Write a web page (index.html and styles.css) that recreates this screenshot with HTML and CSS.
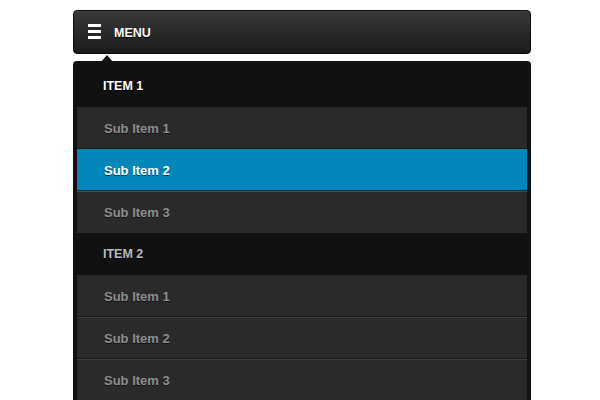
FILE: index.html
```html
<!DOCTYPE html>
<html>
<head>
<meta charset="utf-8">
<link rel="stylesheet" href="styles.css">
</head>
<body>
<div class="nav">
  <div class="menu-bar">
    <span class="burger"><i></i><i></i><i></i></span>
    <span class="menu-label">MENU</span>
    <span class="caret"></span>
  </div>
  <div class="panel">
    <div class="group">
      <div class="item active-parent">ITEM 1</div>
      <div class="sub">Sub Item 1</div>
      <div class="sub active">Sub Item 2</div>
      <div class="sub after-active">Sub Item 3</div>
    </div>
    <div class="group">
      <div class="item">ITEM 2</div>
      <div class="sub">Sub Item 1</div>
      <div class="sub">Sub Item 2</div>
      <div class="sub">Sub Item 3</div>
    </div>
  </div>
</div>
</body>
</html>
```
FILE: styles.css
```css
html, body {
  margin: 0;
  padding: 0;
  background: #ffffff;
  font-family: "Liberation Sans", Arial, sans-serif;
}

.nav {
  width: 458px;
  margin: 10px 0 0 73px;
}

.menu-bar {
  position: relative;
  box-sizing: border-box;
  height: 44px;
  display: flex;
  align-items: center;
  padding-left: 14px;
  gap: 13px;
  border: 1px solid #0a0a0a;
  border-radius: 4px;
  background: linear-gradient(#383838, #1b1b1b);
  box-shadow: inset 0 1px 0 #444;
}

.burger {
  display: flex;
  flex-direction: column;
  gap: 3px;
  width: 13px;
  margin-top: -1px;
}

.burger i {
  display: block;
  height: 3px;
  background: #ffffff;
}

.menu-label {
  color: #ffffff;
  font-weight: bold;
  font-size: 12.5px;
  text-shadow: 0 1px 0 #000;
  margin-top: 1px;
}

.caret {
  position: absolute;
  left: 27px;
  top: 44px;
  width: 0;
  height: 0;
  border-left: 6px solid transparent;
  border-right: 6px solid transparent;
  border-bottom: 7px solid #111;
}

.panel {
  margin-top: 7px;
  background: #111111;
  border-radius: 4px 4px 0 0;
  padding: 4px 4px 8px 4px;
}

.item {
  height: 42px;
  display: flex;
  align-items: center;
  padding-left: 26px;
  font-size: 12.5px;
  font-weight: bold;
  color: #b9bcc0;
  text-shadow: 0 1px 0 #000;
}

.item.active-parent {
  color: #ffffff;
}

.sub {
  box-sizing: border-box;
  height: 42px;
  display: flex;
  align-items: center;
  padding-left: 27px;
  font-size: 13px;
  font-weight: bold;
  color: #8e8e8e;
  background: #2a2a2a;
  border-top: 1px solid #3d3d3d;
  border-bottom: 1px solid #1c1c1c;
  text-shadow: 0 1px 0 #111;
}

.item + .sub {
  border-top-color: #2a2a2a;
}

.sub.active {
  background: #0086b9;
  border-top-color: #0086b9;
  border-bottom-color: #0b3346;
  color: #ffffff;
  text-shadow: 0 1px 0 #05405a;
}

.group .sub:last-child {
  border-bottom-color: #2a2a2a;
}

.sub.after-active {
  border-top-color: #4a4a4a;
}
```
